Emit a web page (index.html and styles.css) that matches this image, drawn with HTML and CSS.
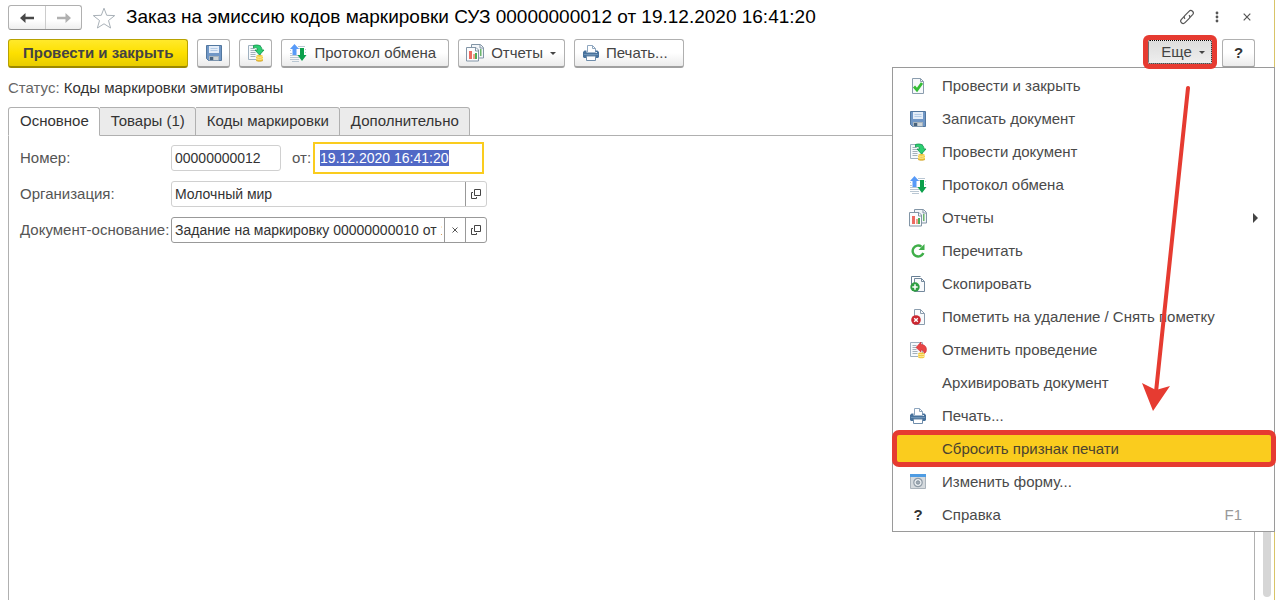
FILE: index.html
```html
<!DOCTYPE html>
<html lang="ru">
<head>
<meta charset="utf-8">
<title>Заказ на эмиссию кодов маркировки СУЗ</title>
<link rel="stylesheet" href="styles.css">
</head>
<body>
<svg class="sprite" aria-hidden="true">
  <symbol id="i-save" viewBox="0 0 16 16">
    <path d="M.5.5h15v15h-13l-2-2z" fill="#7097c6" stroke="#52779f"/>
    <path d="M3 1h10v7H3z" fill="#e4edf8"/><path d="M4.500 3.500h7M4.500 5.500h7" stroke="#b3cbe6"/>
    <path d="M3 11h10v4.500H3z" fill="#a9b5bd"/><path d="M4 12h3v3H4z" fill="#47627c"/><path d="M8 12h4v3H8z" fill="#cdd4d8"/>
  </symbol>
  <symbol id="i-post" viewBox="0 0 18 18">
    <path d="M1.500 1.500h12v14h-12z" fill="#f6f9fc" stroke="#9fb0bf"/>
    <path d="M3.500 4.500h4M3.500 6.500h5M3.500 8.500h5M3.500 10.500h5M3.500 12.500h5" stroke="#a4b0bb"/>
    <path d="M6.500 1.500c5-1.500 8.500.5 8.500 4.500h2l-4.500 5L8 6h2.500c0-2-1-3-4-2z" fill="#2bcf72" stroke="#119548" stroke-width=".8"/>
    <path d="M9 12c0-1.500 7-1.500 7 0v4c0 1.700-7 1.700-7 0z" fill="#f1c63c"/><path d="M9 12.500c2 1 5 1 7 0M9 14.500c2 1 5 1 7 0" fill="none" stroke="#fff0a0"/><path d="M9 16.500c2 1 5 1 7 0" fill="none" stroke="#c99b1c" stroke-width=".7"/>
  </symbol>
  <symbol id="i-proto" viewBox="0 0 18 18">
    <path d="M9 2.500h7M1 6.500h1M9 4.500h2M1 9.500h2M1 11.500h9M1 13.500h9M1 15.500h9M16 5.500h1M16 8.500h1M3 17.500h7" stroke="#b9c7d3"/>
    <path d="M5.500 0l4.500 5H7.500v6h-4V5H1z" fill="#579af8"/>
    <path d="M11 4h4v7h2.500L13 17l-4.500-6H11z" fill="#0ba04b"/>
  </symbol>
  <symbol id="i-report" viewBox="0 0 18 18">
    <path d="M5.500.5h9l3 3v10.500h-12z" fill="#f2f5f8" stroke="#8295a6"/><path d="M14 1v3h3" fill="none" stroke="#8295a6"/>
    <path d="M14 5h1.500v7H14z" fill="#6bb66b"/>
    <path d="M.5 3.500h9.500l2.500 2.500v11H.5z" fill="#fbfcfd" stroke="#8295a6"/><path d="M9.500 4v3h3" fill="none" stroke="#8295a6"/>
    <path d="M3 7h3v8H3z" fill="#ed6a61"/><path d="M7 10h2v5H7z" fill="#f0a08c"/><path d="M9 9h2v6H9z" fill="#4ead55"/>
  </symbol>
  <symbol id="i-print" viewBox="0 0 16 16">
    <path d="M4.500 7V.5h5l3 3V7" fill="#fff" stroke="#8ea6bf"/><path d="M9.500.5v3h3" fill="none" stroke="#8ea6bf"/>
    <path d="M1.500 5.500h2v2h9v-2h2L16 7v5l-1 1H1l-1-1V7z" fill="#48729c"/><path d="M1 9.500h14" stroke="#6d93b7"/>
    <path d="M3.500 11h9v4.500h-9z" fill="#fff" stroke="#6f8dab"/><path d="M12.500 7h1.500v1h-1.500z" fill="#dfeaf5"/>
  </symbol>
  <symbol id="i-ok" viewBox="0 0 16 16">
    <path d="M2.500.5h8l3 3v12h-11z" fill="#f7f9fb" stroke="#8b9dae"/><path d="M10.500.5v3h3" fill="none" stroke="#8b9dae"/>
    <path d="M4 8.500l3 3.500 5-7" fill="none" stroke="#35bd35" stroke-width="2.800"/>
  </symbol>
  <symbol id="i-reload" viewBox="0 0 16 16">
    <path d="M13.300 10A5.500 5.500 0 1 1 11.500 3.600" fill="none" stroke="#3fae49" stroke-width="2.400"/><path d="M8.500 7h6V1z" fill="#3fae49"/>
  </symbol>
  <symbol id="i-copy" viewBox="0 0 16 16">
    <path d="M1.500 13V.5h9" fill="none" stroke="#687f95"/>
    <path d="M4.500 2.500h7l3 3v10h-10z" fill="#f8fafc" stroke="#74899d"/><path d="M11.500 2.500v3h3" fill="none" stroke="#74899d"/>
    <circle cx="5" cy="11" r="4.700" fill="#2f9e43"/><path d="M5 8.300v5.400M2.300 11h5.400" stroke="#fff" stroke-width="1.500"/>
  </symbol>
  <symbol id="i-del" viewBox="0 0 16 16">
    <path d="M4.500.5h6l4 4v11h-10z" fill="#f8fafc" stroke="#8b9dae"/><path d="M10.500.5v4h4" fill="none" stroke="#8b9dae"/>
    <circle cx="6" cy="11" r="4.800" fill="#cb2730"/><path d="M4.200 9.200l3.600 3.600M7.800 9.200l-3.600 3.600" stroke="#fff" stroke-width="1.400"/>
  </symbol>
  <symbol id="i-unpost" viewBox="0 0 18 18">
    <path d="M1.500 1.500h12v14h-12z" fill="#f6f9fc" stroke="#9fb0bf"/>
    <path d="M3.500 4.500h4M3.500 6.500h4M3.500 8.500h4M3.500 10.500h5M3.500 12.500h5" stroke="#a4b0bb"/>
    <path d="M7 6.500L12 1v2.500c4 0 6.500 3 5 7.500l-2 2c0-3-1-4-3-4V11z" fill="#e84545" stroke="#c92f35" stroke-width=".6"/>
    <path d="M9 12.500c0-1.500 6.500-1.500 6.500 0V16c0 1.700-6.500 1.700-6.500 0z" fill="#f1c63c"/><path d="M9 13c2 1 4.500 1 6.500 0M9 15c2 1 4.500 1 6.500 0" fill="none" stroke="#fff0a0"/>
  </symbol>
  <symbol id="i-form" viewBox="0 0 16 16">
    <path d="M.5.500h15v14H.5z" fill="#d5dade" stroke="#aab3bb"/><path d="M0 0h16v3H0z" fill="#4e9ce3"/>
    <circle cx="8" cy="8.500" r="4.200" fill="#e9edf0" stroke="#8f9ba6" stroke-width="1.200"/><circle cx="8" cy="8.500" r="1.700" fill="#a0abb5" stroke="#84919d"/>
  </symbol>
  <symbol id="i-open" viewBox="0 0 10 10">
    <path d="M3.500.5h6v6h-6z" fill="none" stroke="#444"/><path d="M2 3.500H.5v6h5V8" fill="none" stroke="#444"/>
  </symbol>
</svg>

<main class="window">
  <header class="titlebar">
    <div class="history">
      <button aria-label="Назад"><svg width="14" height="10" viewBox="0 0 14 10"><path d="M5.500 0v3.700H14v2.600H5.500V10L0 5z" fill="#484848"/></svg></button>
      <button aria-label="Вперед"><svg width="14" height="10" viewBox="0 0 14 10"><path d="M8.500 0v3.700H0v2.600h8.500V10L14 5z" fill="#b0b0b0"/></svg></button>
    </div>
    <button class="star" aria-label="В избранное"><svg width="24" height="22" viewBox="0 0 24 22"><path d="M12 1.200l2.700 7.100 8 .3-6.200 4.900 2.100 7.500L12 16.800 5.400 21l2.100-7.500L1.300 8.600l8-.3z" fill="none" stroke="#a9b1b8"/></svg></button>
    <h1>Заказ на эмиссию кодов маркировки СУЗ 00000000012 от 19.12.2020 16:41:20</h1>
    <div class="wintools">
      <button aria-label="Ссылка"><svg width="16" height="16" viewBox="0 0 16 16" fill="none" stroke="#555" stroke-width="1.200"><path d="M6 9.800c-1-1-1-2.500 0-3.500l4-4c2.300-2.300 5.800 1 3.600 3.400L11 8.300"/><path d="M10 6.200c1 1 1 2.500 0 3.500l-4 4c-2.300 2.300-5.800-1-3.600-3.400L5 7.700"/></svg></button>
      <button aria-label="Меню"><svg width="4" height="12" viewBox="0 0 4 12" fill="#555"><circle cx="2" cy="2" r="1.400"/><circle cx="2" cy="6" r="1.400"/><circle cx="2" cy="10" r="1.400"/></svg></button>
      <button aria-label="Закрыть"><svg width="8" height="8" viewBox="0 0 8 8"><path d="M.7.7l6.600 6.600M7.300.7L.7 7.300" stroke="#555" stroke-width="1.200"/></svg></button>
    </div>
  </header>

  <div class="toolbar">
    <button class="btn primary">Провести и закрыть</button>
    <button class="btn square" aria-label="Записать документ"><svg class="i16"><use href="#i-save"/></svg></button>
    <button class="btn square" aria-label="Провести документ"><svg class="i18"><use href="#i-post"/></svg></button>
    <button class="btn"><svg class="i18"><use href="#i-proto"/></svg>Протокол обмена</button>
    <button class="btn"><svg class="i18"><use href="#i-report"/></svg>Отчеты<i class="caret"></i></button>
    <button class="btn print"><svg class="i16"><use href="#i-print"/></svg>Печать...</button>
    <div class="more">
      <button class="btn more-btn" aria-expanded="true">Еще<i class="caret"></i></button>
      <button class="btn square help" aria-label="Справка">?</button>
      <div class="menu" role="menu">
        <button role="menuitem"><svg class="i16"><use href="#i-ok"/></svg><span>Провести и закрыть</span></button>
        <button role="menuitem"><svg class="i16"><use href="#i-save"/></svg><span>Записать документ</span></button>
        <button role="menuitem"><svg class="i18"><use href="#i-post"/></svg><span>Провести документ</span></button>
        <button role="menuitem"><svg class="i18"><use href="#i-proto"/></svg><span>Протокол обмена</span></button>
        <button role="menuitem"><svg class="i18"><use href="#i-report"/></svg><span>Отчеты</span><i class="submenu"></i></button>
        <button role="menuitem"><svg class="i16"><use href="#i-reload"/></svg><span>Перечитать</span></button>
        <button role="menuitem"><svg class="i16"><use href="#i-copy"/></svg><span>Скопировать</span></button>
        <button role="menuitem"><svg class="i16"><use href="#i-del"/></svg><span>Пометить на удаление / Снять пометку</span></button>
        <button role="menuitem"><svg class="i18"><use href="#i-unpost"/></svg><span>Отменить проведение</span></button>
        <button role="menuitem"><b></b><span>Архивировать документ</span></button>
        <button role="menuitem"><svg class="i16"><use href="#i-print"/></svg><span>Печать...</span></button>
        <button role="menuitem" class="current"><b></b><span>Сбросить признак печати</span></button>
        <button role="menuitem"><svg class="i16"><use href="#i-form"/></svg><span>Изменить форму...</span></button>
        <button role="menuitem"><b>?</b><span>Справка</span><kbd>F1</kbd></button>
        <svg class="pointer" width="30" height="326" viewBox="0 0 30 326" aria-hidden="true"><path d="M47 2L15 306" stroke="#e63b31" stroke-width="4" stroke-linecap="round"/><path d="M1 297l14 7 14-4-17 25z" fill="#e63b31"/></svg>
      </div>
    </div>
  </div>

  <p class="status">Статус: <span>Коды маркировки эмитированы</span></p>

  <nav class="tabs" role="tablist">
    <button role="tab" aria-selected="true">Основное</button>
    <button role="tab" aria-selected="false">Товары (1)</button>
    <button role="tab" aria-selected="false">Коды маркировки</button>
    <button role="tab" aria-selected="false">Дополнительно</button>
  </nav>

  <div class="body">
    <form class="panel">
      <label for="num">Номер:</label>
      <div class="line">
        <div class="field short"><input id="num" value="00000000012"></div>
        <label for="date">от:</label>
        <input id="date" class="date" value="19.12.2020 16:41:20">
      </div>
      <label for="org">Организация:</label>
      <div class="field"><input id="org" value="Молочный мир"><button type="button" aria-label="Открыть организацию"><svg class="i10"><use href="#i-open"/></svg></button></div>
      <label for="base">Документ-основание:</label>
      <div class="field dark"><input id="base" value="Задание на маркировку 00000000010 от 19.12.2020"><button type="button" aria-label="Очистить"><svg width="6" height="6" viewBox="0 0 6 6"><path d="M.5.5l5 5M5.500.5l-5 5" stroke="#555"/></svg></button><button type="button" aria-label="Открыть документ"><svg class="i10"><use href="#i-open"/></svg></button></div>
    </form>
    <div class="scroll"><div class="thumb"></div></div>
  </div>
</main>
<script src="app.js"></script>
</body>
</html>
```
FILE: styles.css
```css
* { box-sizing: border-box; }
body { margin: 0; background: #fff; color: #333; font: 15px/18px "Liberation Sans", Arial, sans-serif; }
button, input { font: inherit; color: inherit; }
button { padding: 0; border: 0; background: none; }
svg { display: block; flex: none; }
.sprite { position: absolute; width: 0; height: 0; }
.i10 { width: 10px; height: 10px; }
.i16 { width: 16px; height: 16px; }
.i18 { width: 18px; height: 18px; }

.window { display: flex; flex-direction: column; min-height: 100vh; margin-right: 1px; padding: 5px 0 0 8px; border-right: 1px solid #d8c468; }

.titlebar { display: flex; align-items: center; height: 25px; padding-right: 19px; }
.history { display: flex; height: 25px; border: 1px solid #b0b0b0; border-bottom-color: #909090; border-radius: 3px; background: linear-gradient(#fff 60%, #eee); }
.history button { display: grid; place-items: center; width: 36px; }
.history button + button { border-left: 1px solid #ccc; }
.star { margin: 0 10px; }
h1 { margin: 0; padding-bottom: 2px; color: #000; font-size: 19px; font-weight: 400; line-height: 24px; white-space: nowrap; }
.wintools { display: flex; gap: 14px; margin-left: auto; padding-bottom: 2px; }
.wintools button { display: grid; place-items: center; width: 16px; }

.toolbar { display: flex; gap: 9px; margin-top: 9px; padding-right: 19px; }
.btn { display: flex; align-items: center; justify-content: center; gap: 7px; height: 29px; padding: 0 12px 0 7px; border: 1px solid #b0b0b0; border-bottom: 2px solid #a0a0a0; border-radius: 3px; background: linear-gradient(#fff 50%, #ebebeb); color: #444; white-space: nowrap; }
.primary { padding: 0 14px; border-color: #b8a200 #b8a200 #9c8900; background: linear-gradient(#ffe92b, #fde000 50%, #e8cc00); font-weight: 700; }
.square { width: 33px; padding: 0; }
.print { padding: 0 15px 0 8px; }
.caret { border: 3px solid transparent; border-top-color: #444; border-bottom: 0; }
.btn .caret { margin-right: -4px; }
.help { color: #333; font-weight: 700; }
.more { position: relative; display: flex; gap: 10px; margin-left: auto; }
.more-btn { position: relative; z-index: 1; height: 24px; width: 64px; margin-top: 1px; padding: 0 7px 0 13px; border: 1px dotted #000; border-radius: 2px; box-shadow: 0 0 0 5px #e63b31; background: linear-gradient(#ddd, #eee); }
.more-btn .caret { margin: 0; }

.menu { position: absolute; top: 28px; right: -20px; width: 383px; padding-top: 1px; border: 1px solid #9a9a9a; background: #fff; }
.menu button { display: grid; grid-template-columns: 48px 1fr auto; align-items: center; width: 100%; height: 33px; padding: 1px 32px 1px 1px; color: #4a4a4a; text-align: left; }
.menu button > :first-child { justify-self: center; color: #333; }
.menu kbd { color: #999; font: inherit; }
.submenu { justify-self: end; margin-right: -16px; border: 5px solid transparent; border-left-color: #444; border-right: 0; }
.menu button.current { width: calc(100% - 1px); margin-left: 1px; padding-left: 0; outline: 5px solid #e63b31; outline-offset: -3px; border-radius: 5px; background: #facc1e; color: #4a4330; }
.pointer { position: absolute; top: 18px; left: 248px; overflow: visible; pointer-events: none; }

.status { margin: 11px 0 10px; color: #666; }
.status span { color: #333; }

.tabs { display: flex; height: 29px; margin-bottom: -1px; }
.tabs button { padding: 0 10px 2px 11px; border: 1px solid #b0b0b0; border-left-width: 0; border-radius: 0 3px 0 0; background: #ebebeb; }
.tabs button[aria-selected="true"] { border-left-width: 1px; border-radius: 3px 3px 0 0; border-bottom-color: #fff; background: #fff; }

.body { position: relative; z-index: -1; display: flex; flex: 1; }
.panel { display: grid; grid-template-columns: 146px 316px; flex: 1; align-content: start; align-items: center; grid-auto-rows: 26px; gap: 10px 5px; padding: 9px 11px; border: 1px solid #b0b0b0; border-bottom: 0; }
.panel label { color: #555; white-space: nowrap; }
.line { display: flex; align-items: center; gap: 11px; }
.line label { margin-right: -9px; }
.field { display: flex; height: 26px; border: 1px solid #d0d0d0; border-radius: 3px; }
.field.short { width: 110px; flex: none; }
.field input, .date { font-size: 14px; }
.field input { flex: 1; min-width: 0; padding: 0 2px 0 3px; border: 0; outline: 0; background: none; }
.field button { display: grid; place-items: center; width: 21px; border-left: 1px solid #999; }
.dark { border-color: #999; }
.date { flex: none; width: 171px; height: 32px; padding: 0 5px; border: 2px solid #facc1e; outline: 0; }
.date::selection { background: #5169c6; color: #fff; }
.scroll { display: flex; width: 19px; padding: 0 3px 3px 8px; }
.thumb { flex: 1; border-radius: 4px; background: #d6d6d6; }
```
FILE: app.js
```js
const dateInput = document.getElementById('date');
dateInput.focus();
dateInput.select();
```
